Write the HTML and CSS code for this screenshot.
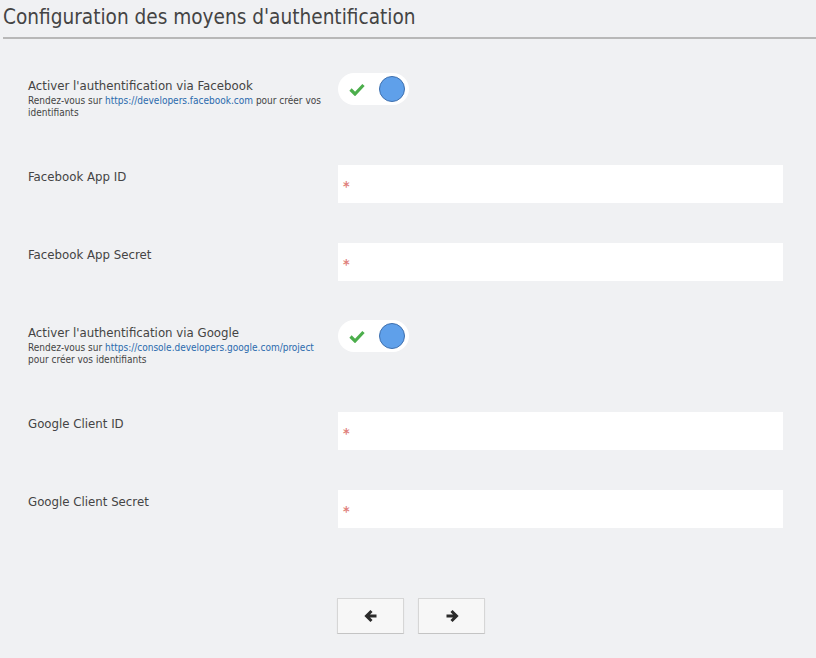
FILE: index.html
```html
<!DOCTYPE html>
<html lang="fr">
<head>
<meta charset="utf-8">
<link rel="stylesheet" href="styles.css">
</head>
<body>
<div class="page">
  <h1 class="title">Configuration des moyens d'authentification</h1>
  <div class="form">
    <div class="row row-toggle">
      <div class="label">
        <div class="label-main">Activer l'authentification via Facebook</div>
        <div class="help">Rendez-vous sur <a href="#">https://developers.facebook.com</a> pour créer vos identifiants</div>
      </div>
      <div class="field">
        <div class="toggle">
          <svg class="check" width="16" height="13" viewBox="0 0 16 13"><path d="M1.5 6.5 L6 11 L14.5 2" fill="none" stroke="#4cae4c" stroke-width="3.2"/></svg>
          <span class="knob"></span>
        </div>
      </div>
    </div>
    <div class="row row-input">
      <div class="label"><div class="label-main">Facebook App ID</div></div>
      <div class="field"><div class="input"><span class="req">*</span></div></div>
    </div>
    <div class="row row-input row-short">
      <div class="label"><div class="label-main">Facebook App Secret</div></div>
      <div class="field"><div class="input"><span class="req">*</span></div></div>
    </div>
    <div class="row row-toggle">
      <div class="label">
        <div class="label-main">Activer l'authentification via Google</div>
        <div class="help">Rendez-vous sur <a href="#">https://console.developers.google.com/project</a> pour créer vos identifiants</div>
      </div>
      <div class="field">
        <div class="toggle">
          <svg class="check" width="16" height="13" viewBox="0 0 16 13"><path d="M1.5 6.5 L6 11 L14.5 2" fill="none" stroke="#4cae4c" stroke-width="3.2"/></svg>
          <span class="knob"></span>
        </div>
      </div>
    </div>
    <div class="row row-input">
      <div class="label"><div class="label-main">Google Client ID</div></div>
      <div class="field"><div class="input"><span class="req">*</span></div></div>
    </div>
    <div class="row row-input">
      <div class="label"><div class="label-main">Google Client Secret</div></div>
      <div class="field"><div class="input"><span class="req">*</span></div></div>
    </div>
  </div>
  <div class="nav">
    <button class="btn" type="button">
      <svg width="14" height="14" viewBox="0 0 14 14"><path d="M12.5 7 H3 M7.5 2 L2.5 7 L7.5 12" fill="none" stroke="#2b2b2b" stroke-width="3"/></svg>
    </button>
    <button class="btn" type="button">
      <svg width="14" height="14" viewBox="0 0 14 14"><path d="M1.5 7 H11 M6.5 2 L11.5 7 L6.5 12" fill="none" stroke="#2b2b2b" stroke-width="3"/></svg>
    </button>
  </div>
</div>
</body>
</html>
```
FILE: styles.css
```css
html, body {
  margin: 0;
  padding: 0;
  background: #f0f1f3;
}
body {
  font-family: "DejaVu Sans Condensed", "DejaVu Sans", sans-serif;
  color: #444;
}
.page {
  padding: 0 0 0 3px;
}
.title {
  margin: 0;
  padding: 5px 0 8px 0;
  font-size: 20.6px;
  font-weight: normal;
  color: #444;
  line-height: 24px;
  border-bottom: 2px solid #b8b8b8;
}
.form {
  padding: 34px 0 0 25px;
}
.row {
  display: flex;
  align-items: flex-start;
}
.row-toggle {
  height: 92px;
}
.row-input {
  height: 78px;
}
.row-short {
  height: 77px;
}
.label {
  width: 310px;
  flex: none;
  box-sizing: border-box;
  padding-right: 4px;
}
.row-toggle .label {
  padding-top: 5px;
}
.row-input .label {
  padding-top: 4px;
}
.label-main {
  font-size: 13.1px;
  line-height: 16px;
  color: #444;
}
.help {
  margin-top: 1px;
  font-size: 10px;
  line-height: 12px;
  color: #444;
}
.help a {
  color: #2a6aad;
  text-decoration: none;
}
.field {
  flex: none;
  width: 445px;
}
.input {
  height: 38px;
  background: #fff;
  display: flex;
  align-items: center;
  padding-left: 5px;
}
.req {
  color: #e0807a;
  font-size: 14px;
  font-weight: bold;
  line-height: 1;
  margin-top: 3px;
}
.toggle {
  width: 71px;
  height: 32px;
  border-radius: 16px;
  background: #fff;
  display: flex;
  align-items: center;
  justify-content: space-between;
  padding: 0 4px 0 11px;
  box-sizing: border-box;
}
.knob {
  width: 24px;
  height: 24px;
  border-radius: 50%;
  background: #5fa0ea;
  border: 1px solid #3d6fae;
}
.nav {
  display: flex;
  gap: 14px;
  padding-left: 334px;
  margin-top: 30px;
}
.btn {
  width: 67px;
  height: 36px;
  background: #f7f7f7;
  border: 1px solid #d6d6d6;
  border-bottom-color: #c4c4c4;
  box-shadow: 0 1px 1px rgba(0,0,0,0.08);
  display: flex;
  align-items: center;
  justify-content: center;
  padding: 0;
}
```
